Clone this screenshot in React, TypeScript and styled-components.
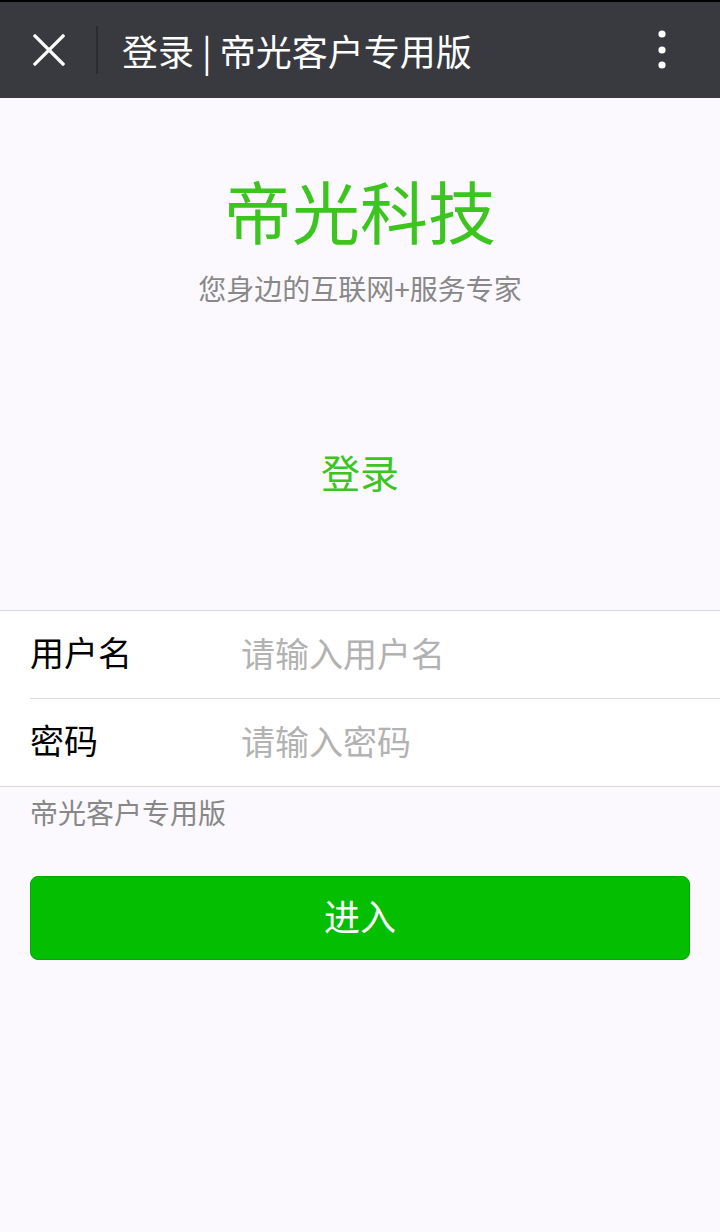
import React from "react";
import styled, { createGlobalStyle } from "styled-components";

const GlobalStyle = createGlobalStyle`
  html, body {
    margin: 0;
    padding: 0;
    background: #fbf9fe;
  }
  body {
    font-family: "Noto Sans CJK SC", "Noto Sans", sans-serif;
    width: 720px;
    min-height: 1232px;
  }
  * { box-sizing: border-box; }
`;

const NavBar = styled.header`
  height: 98px;
  border-top: 2px solid #000;
  background: #393a3f;
  display: flex;
  align-items: center;
  color: #fff;
`;

const IconButton = styled.button`
  background: none;
  border: none;
  padding: 0;
  display: flex;
  align-items: center;
  justify-content: center;
  cursor: pointer;
`;

const Divider = styled.span`
  width: 2px;
  height: 48px;
  background: #2b2c30;
  margin-left: 31px;
`;

const NavTitle = styled.h1`
  flex: 1;
  margin: 0 0 0 24px;
  font-size: 36px;
  font-weight: 400;
  line-height: 1;
  color: #fff;
  white-space: nowrap;
`;

const Page = styled.main`
  display: flex;
  flex-direction: column;
`;

const Brand = styled.section`
  display: flex;
  flex-direction: column;
  align-items: center;
  padding-top: 78px;
`;

const BrandName = styled.div`
  font-size: 68px;
  line-height: 1;
  color: #3cc51f;
`;

const Slogan = styled.div`
  margin-top: 30px;
  font-size: 28px;
  line-height: 1;
  color: #888;
`;

const SectionTitle = styled.div`
  margin-top: 150px;
  font-size: 39px;
  line-height: 1;
  color: #3cc51f;
`;

const FieldGroup = styled.div`
  margin-top: 119px;
  background: #fff;
  border-top: 1px solid #d9d9d9;
  border-bottom: 1px solid #d9d9d9;
`;

const Field = styled.label<{ $last?: boolean }>`
  display: flex;
  align-items: center;
  height: ${(p) => (p.$last ? "87px" : "88px")};
  margin-left: 30px;
  padding-bottom: 5px;
  border-bottom: ${(p) => (p.$last ? "none" : "1px solid #d9d9d9")};
`;

const FieldLabel = styled.span`
  width: 211px;
  font-size: 34px;
  line-height: 1;
  color: #000;
`;

const FieldInput = styled.input`
  flex: 1;
  border: none;
  outline: none;
  background: transparent;
  font-family: inherit;
  font-size: 34px;
  line-height: 1;
  color: #000;
  padding: 0;
  &::placeholder {
    color: #b2b2b2;
  }
`;

const Tip = styled.div`
  margin: 11px 30px 0;
  font-size: 28px;
  line-height: 1;
  color: #888;
`;

const SubmitButton = styled.button`
  margin: 50px 30px 0;
  height: 84px;
  padding: 0 0 6px;
  border: 1px solid #03a602;
  border-radius: 8px;
  background: #04be02;
  color: #fff;
  font-family: inherit;
  font-size: 36px;
  cursor: pointer;
`;

const CloseIcon = () => (
  <svg width="32" height="32" viewBox="0 0 32 32">
    <path d="M2 2 L30 30 M30 2 L2 30" stroke="#fff" strokeWidth="3.2" strokeLinecap="square" />
  </svg>
);

const MoreIcon = () => (
  <svg width="12" height="40" viewBox="0 0 12 40">
    <circle cx="6" cy="4" r="3.6" fill="#fff" />
    <circle cx="6" cy="20" r="3.6" fill="#fff" />
    <circle cx="6" cy="35" r="3.6" fill="#fff" />
  </svg>
);

const App = () => (
  <>
    <GlobalStyle />
    <NavBar>
      <IconButton style={{ marginLeft: 33 }} aria-label="关闭">
        <CloseIcon />
      </IconButton>
      <Divider />
      <NavTitle>登录 | 帝光客户专用版</NavTitle>
      <IconButton style={{ marginRight: 52 }} aria-label="更多">
        <MoreIcon />
      </IconButton>
    </NavBar>

    <Page>
      <Brand>
        <BrandName>帝光科技</BrandName>
        <Slogan>您身边的互联网+服务专家</Slogan>
        <SectionTitle>登录</SectionTitle>
      </Brand>

      <FieldGroup>
        <Field>
          <FieldLabel>用户名</FieldLabel>
          <FieldInput type="text" placeholder="请输入用户名" />
        </Field>
        <Field $last>
          <FieldLabel>密码</FieldLabel>
          <FieldInput type="password" placeholder="请输入密码" />
        </Field>
      </FieldGroup>

      <Tip>帝光客户专用版</Tip>
      <SubmitButton type="button">进入</SubmitButton>
    </Page>
  </>
);

export default App;
